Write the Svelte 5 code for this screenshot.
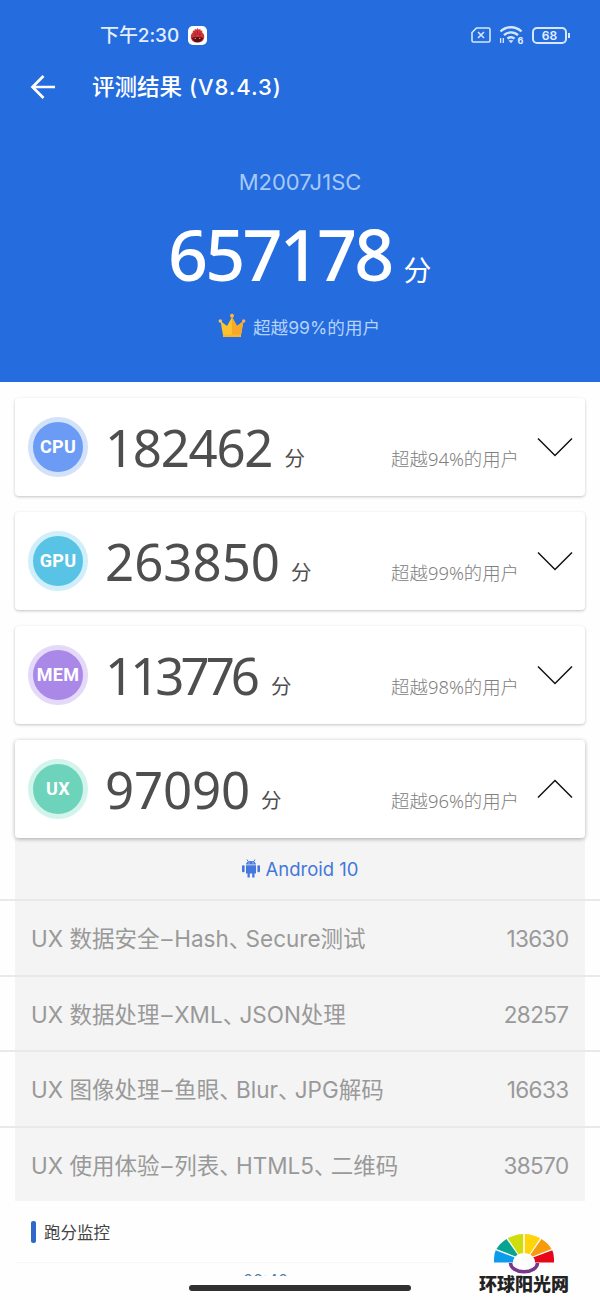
<script lang="ts">
  type Card = {
    name: string;
    score: string;
    tracking: number; // px between figures, tighter when the score has many 1s and 7s
    rank: string;
    fill: string;
    ring: string;
    open?: boolean;
  };

  const cards: Card[] = [
    { name: 'CPU', score: '182462', tracking: -1.3, rank: '94%', fill: '#6b9bf4', ring: '#d2e2fa' },
    { name: 'GPU', score: '263850', tracking: 0, rank: '99%', fill: '#59c3e6', ring: '#d0effa' },
    { name: 'MEM', score: '113776', tracking: -4, rank: '98%', fill: '#a988e8', ring: '#e4d9f8' },
    { name: 'UX', score: '97090', tracking: -0.2, rank: '96%', fill: '#6ed3bb', ring: '#d3f4ec', open: true }
  ];

  const tests = [
    { label: 'UX 数据安全–Hash、Secure测试', score: 13630 },
    { label: 'UX 数据处理–XML、JSON处理', score: 28257 },
    { label: 'UX 图像处理–鱼眼、Blur、JPG解码', score: 16633 },
    { label: 'UX 使用体验–列表、HTML5、二维码', score: 38570 }
  ];
</script>

<div class="screen">
  <header>
    <div class="status">
      <span class="time">下午2:30</span>
      <svg class="app-icon" width="19" height="19" viewBox="0 0 20 20">
        <rect width="20" height="20" rx="5" fill="#fff" />
        <path d="M10 2.200l1.200 1.700 1.700-.9.300 1.800 2 .1-.4 1.800c1.700 1.400 2.500 3 2.300 5-.3 3.800-3.200 6-7.100 6s-6.900-2.300-7.100-6c-.1-2 .7-3.600 2.300-5L5 5l2-.2.2-1.800 1.600.9z" fill="#d23238" />
        <path d="M4 12.500c1 2.800 3 4.400 6 4.400s5-1.600 6-4.400c-2-1.300-10-1.300-12 0z" fill="#5c1017" />
        <path d="M7.500 7v4M10 5v4M12.500 7v4" stroke="#8c1c26" stroke-width=".8" />
        <circle cx="7.600" cy="13" r=".7" fill="#f5b9b0" />
        <circle cx="12.400" cy="13" r=".7" fill="#f5b9b0" />
      </svg>
      <div class="indicators">
        <svg width="20" height="16" viewBox="0 0 20 16" fill="none" stroke="#d6e8ff" stroke-width="1.600">
          <path d="M5.500 1H17.500a1.500 1.500 0 0 1 1.500 1.500v11a1.500 1.500 0 0 1-1.500 1.500H2.500A1.500 1.500 0 0 1 1 13.500V5.500z" />
          <path d="M7 5l6 6M13 5l-6 6" />
        </svg>
        <svg class="wifi" width="25" height="20" viewBox="0 0 25 20" fill="none" stroke="#d6e8ff">
          <path d="M1.500 6.500a15 15 0 0 1 21 0M5 10.200a10 10 0 0 1 14 0M8.500 13.600a5.500 5.500 0 0 1 7 0" stroke-width="2.400" />
          <path d="M9.500 15.200h5L12 18.300z" fill="#d6e8ff" stroke="none" />
          <path d="M1.600 13v5M4.300 13v5" stroke-width="1.300" />
          <text x="18.500" y="18.700" fill="#e6f1ff" stroke="none">6</text>
        </svg>
        <span class="battery">68</span>
      </div>
    </div>

    <div class="title">
      <svg width="26" height="26" viewBox="0 0 26 26" fill="none" stroke="#fff" stroke-width="2.700">
        <path d="M25 13H3M13.500 2L2.500 13l11 11" />
      </svg>
      <h1>评测结果 <span>(V8.4.3)</span></h1>
    </div>

    <div class="model">M2007J1SC</div>
    <div class="total"><b>657178</b><span>分</span></div>
    <div class="beat">
      <svg width="28" height="26" viewBox="0 0 28 26">
        <path d="M2.500 8l6.500 5L14 4l5 9 6.500-5L23 22H5z" fill="#fbc42f" />
        <path d="M14 4l5 9 6.500-5L23 22h-9z" fill="#f9a82a" />
        <path d="M5 21.500h18V24H5z" fill="#fbb52a" />
        <circle cx="14" cy="2.700" r="2" fill="#fbb83a" />
        <circle cx="2.300" cy="8" r="1.700" fill="#fbc75a" />
        <circle cx="25.700" cy="8" r="1.700" fill="#f9b05a" />
      </svg>
      <span>超越99%的用户</span>
    </div>
  </header>

  <main>
    {#each cards as card}
      <section class="card" class:open={card.open}>
        <div class="badge" style:background={card.fill} style:border-color={card.ring}>{card.name}</div>
        <div class="score" style:letter-spacing="{card.tracking}px" style:margin-right="{-card.tracking}px">{card.score}</div>
        <div class="unit">分</div>
        <div class="rank">超越{card.rank}的用户</div>
        <svg class="chevron" width="36" height="20" viewBox="0 0 36 20" fill="none" stroke="#111" stroke-width="1.500">
          <path d={card.open ? 'M1 18.500L18 1.500l17 17' : 'M1 1.500l17 17 17-17'} />
        </svg>
      </section>
    {/each}
  </main>

  <div class="details">
    <div class="os">
      <svg width="18" height="19" viewBox="0 0 18 19" fill="#4478dc">
        <path d="M4 5.500C4.200 3.500 6 2 9 2s4.800 1.500 5 3.500z" />
        <path d="M5 .5L6.500 3M13 .5L11.500 3" stroke="#4478dc" />
        <path d="M4 6.300h10v8.200H4zM5.500 14h2.300v4.500H5.500zM10.200 14h2.300v4.500h-2.300z" />
        <rect x="0" y="6.300" width="2.600" height="7" rx="1" />
        <rect x="15.400" y="6.300" width="2.600" height="7" rx="1" />
        <path d="M6.500 3.500h1v1h-1zM10.500 3.500h1v1h-1z" fill="#f4f4f4" />
      </svg>
      <span>Android 10</span>
    </div>
    {#each tests as test}
      <div class="row">
        <span class="label">{#each test.label.split(/([、–])/) as part}{#if part === '、'}<i class="comma">、</i>{:else if part === '–'}<i class="dash">–</i>{:else}{part}{/if}{/each}</span>
        <span class="value">{test.score}</span>
      </div>
    {/each}
  </div>

  <h2>跑分监控</h2>
  <div class="monitor"><span>00:40</span></div>

  <div class="home-bar"></div>

  <div class="watermark">
    <svg width="60" height="40" viewBox="0 0 60 40">
      <path d="M0 28.500V25q0-5 1.700-8.700L21 23.500q-1.500 2.300-1.500 5z" fill="#0c9cea" />
      <path d="M2.500 15Q5.500 9.500 12.500 5L23.500 20.500l-2 2z" fill="#0aa391" />
      <path d="M13.800 4.200Q21 .3 29.200 0v19.300q-2.500 0-4.700 1z" fill="#cfdd0c" />
      <path d="M30.800 0Q39 .3 46.200 4.200L35.500 20.300q-2.200-1-4.700-1z" fill="#ffd40a" />
      <path d="M47.500 5Q54.500 9.500 57.500 15l-19 7.500-2-2z" fill="#f59b0c" />
      <path d="M58.300 16.300Q60 20 60 25v3.500H40.500q0-2.700-1.500-5z" fill="#e60718" />
      <ellipse cx="30" cy="28" rx="11" ry="8.500" fill="#fefefe" />
      <path d="M16.500 29a13.500 8.800 0 0 0 27 0" fill="none" stroke="#78378b" stroke-width="3.500" />
    </svg>
    <span>环球阳光网</span>
  </div>
</div>

<style>
  :global(body) {
    margin: 0;
    background: #fff;
  }

  .screen {
    position: relative;
    width: 600px;
    height: 1300px;
    overflow: hidden;
    background: #fefefe;
    font-family: Inter, 'Noto Sans CJK SC', sans-serif;
  }

  header {
    height: 382px;
    background: #256cdf;
    color: #fff;
  }

  .status {
    display: flex;
    align-items: center;
    height: 50px;
    padding: 10px 29px 0 100px;
  }

  .time {
    padding-top: 1px;
    font-size: 19px;
    font-weight: 500;
    line-height: 50px;
    letter-spacing: -0.1px;
    color: #e3efff;
  }

  .app-icon {
    margin-left: 9px;
  }

  .indicators {
    display: flex;
    align-items: center;
    gap: 8px;
    margin-left: auto;
  }

  .wifi text {
    font-size: 9px;
    font-weight: 700;
  }

  .battery {
    position: relative;
    box-sizing: border-box;
    width: 35px;
    height: 17px;
    margin-right: 4px;
    border: 2px solid #d6e8ff;
    border-radius: 5px;
    font-size: 12px;
    font-weight: 600;
    line-height: 13px;
    text-align: center;
    color: #e6f1ff;
  }

  .battery::after {
    content: '';
    position: absolute;
    top: 4px;
    right: -5px;
    width: 2px;
    height: 5px;
    background: #d6e8ff;
  }

  .title {
    display: flex;
    align-items: center;
    height: 54px;
    padding-left: 30px;
  }

  h1 {
    margin: 0 0 0 36px;
    font-size: 22.5px;
    font-weight: 500;
    line-height: 54px;
    white-space: nowrap;
  }

  h1 span {
    margin-left: 1px;
    font-size: 22px;
    letter-spacing: 0.9px;
  }

  .model {
    margin-top: 52px;
    font-size: 22px;
    line-height: 32px;
    text-align: center;
    color: #a6c9f8;
  }

  .total {
    display: flex;
    align-items: baseline;
    height: 84px;
    margin-top: 14px;
    padding-left: 168px;
  }

  .total b {
    font-family: 'Noto Sans', sans-serif;
    font-size: 70px;
    font-weight: 500;
    line-height: 84px;
    letter-spacing: -2.8px;
  }

  .total span {
    margin-left: 12px;
    font-size: 28px;
  }

  .beat {
    display: flex;
    align-items: center;
    height: 30px;
    margin-top: 15px;
    padding-left: 218px;
    font-size: 17.6px;
    color: #b4d2fa;
  }

  .beat span {
    margin-left: 7px;
  }

  main {
    display: grid;
    gap: 16px;
    padding: 16px 15px 0;
  }

  .card {
    position: relative;
    display: flex;
    align-items: center;
    box-sizing: border-box;
    height: 98px;
    padding: 0 12px 0 13px;
    border-radius: 4px;
    background: #fff;
    box-shadow: 0 1px 3px rgba(0, 0, 0, 0.24);
  }

  .card.open {
    z-index: 1;
    box-shadow: 0 1px 4px rgba(0, 0, 0, 0.32);
  }

  .badge {
    box-sizing: border-box;
    width: 60px;
    height: 60px;
    border: 5px solid;
    border-radius: 50%;
    font: 700 18px/50px Roboto, sans-serif;
    letter-spacing: 0.3px;
    text-align: center;
    color: #fff;
  }

  .score {
    margin-left: 17px;
    font-family: 'Noto Sans', sans-serif;
    font-size: 51px;
    line-height: 98px;
    color: #4e4e4e;
  }

  .unit {
    margin: 24px 0 0 11px;
    font-size: 20.5px;
    line-height: 30px;
    color: #4e4e4e;
  }

  .rank {
    margin: 24px 0 0 auto;
    font-family: 'Noto Sans', 'Noto Sans CJK SC', sans-serif;
    font-size: 18.4px;
    font-weight: 300;
    line-height: 26px;
    color: #808080;
  }

  .chevron {
    margin-left: 18px;
  }

  .details {
    background: linear-gradient(90deg, transparent 15px, #f4f4f4 15px, #f4f4f4 585px, transparent 585px);
  }

  .os {
    display: flex;
    align-items: center;
    justify-content: center;
    gap: 6px;
    height: 61px;
    font-size: 18.5px;
    color: #4478dc;
  }

  .row {
    display: flex;
    justify-content: space-between;
    box-sizing: border-box;
    height: 75.6px;
    padding: 0 31px;
    border-top: 2px solid #e9e9e9;
    font-size: 22.5px;
    line-height: 75.6px;
    white-space: nowrap;
    color: #999;
  }

  .value {
    margin-right: 0.5px;
    letter-spacing: -0.6px;
  }

  .comma {
    padding-right: 5.5px;
    font-feature-settings: 'halt';
    font-style: normal;
  }

  .dash {
    padding: 0 1.8px;
    font-style: normal;
  }

  h2 {
    display: flex;
    align-items: center;
    box-sizing: border-box;
    height: 61px;
    margin: 0;
    padding: 1px 0 0 31px;
    font-size: 16.5px;
    font-weight: 400;
    color: #444;
  }

  h2::before {
    content: '';
    width: 5px;
    height: 22px;
    margin-right: 8px;
    border-radius: 2px;
    background: #2f68c8;
  }

  .monitor {
    height: 14px;
    margin: 0 15px;
    overflow: hidden;
    border-top: 1px solid #f6f6f6;
    box-sizing: border-box;
    font-size: 16px;
    line-height: 34px;
    text-align: center;
    color: #4d7ea8;
  }

  .monitor span {
    margin-right: 69px;
  }

  .home-bar {
    width: 222px;
    height: 6px;
    margin: 9px auto 0;
    border-radius: 3px;
    background: #303030;
  }

  .watermark {
    position: absolute;
    top: 1234px;
    left: 450px;
    display: flex;
    flex-direction: column;
    align-items: center;
    width: 148px;
    height: 66px;
    background: #fefefe;
    color: #222;
    font: 900 18px/22px 'Liberation Serif', 'Noto Sans CJK SC', serif;
  }
</style>
